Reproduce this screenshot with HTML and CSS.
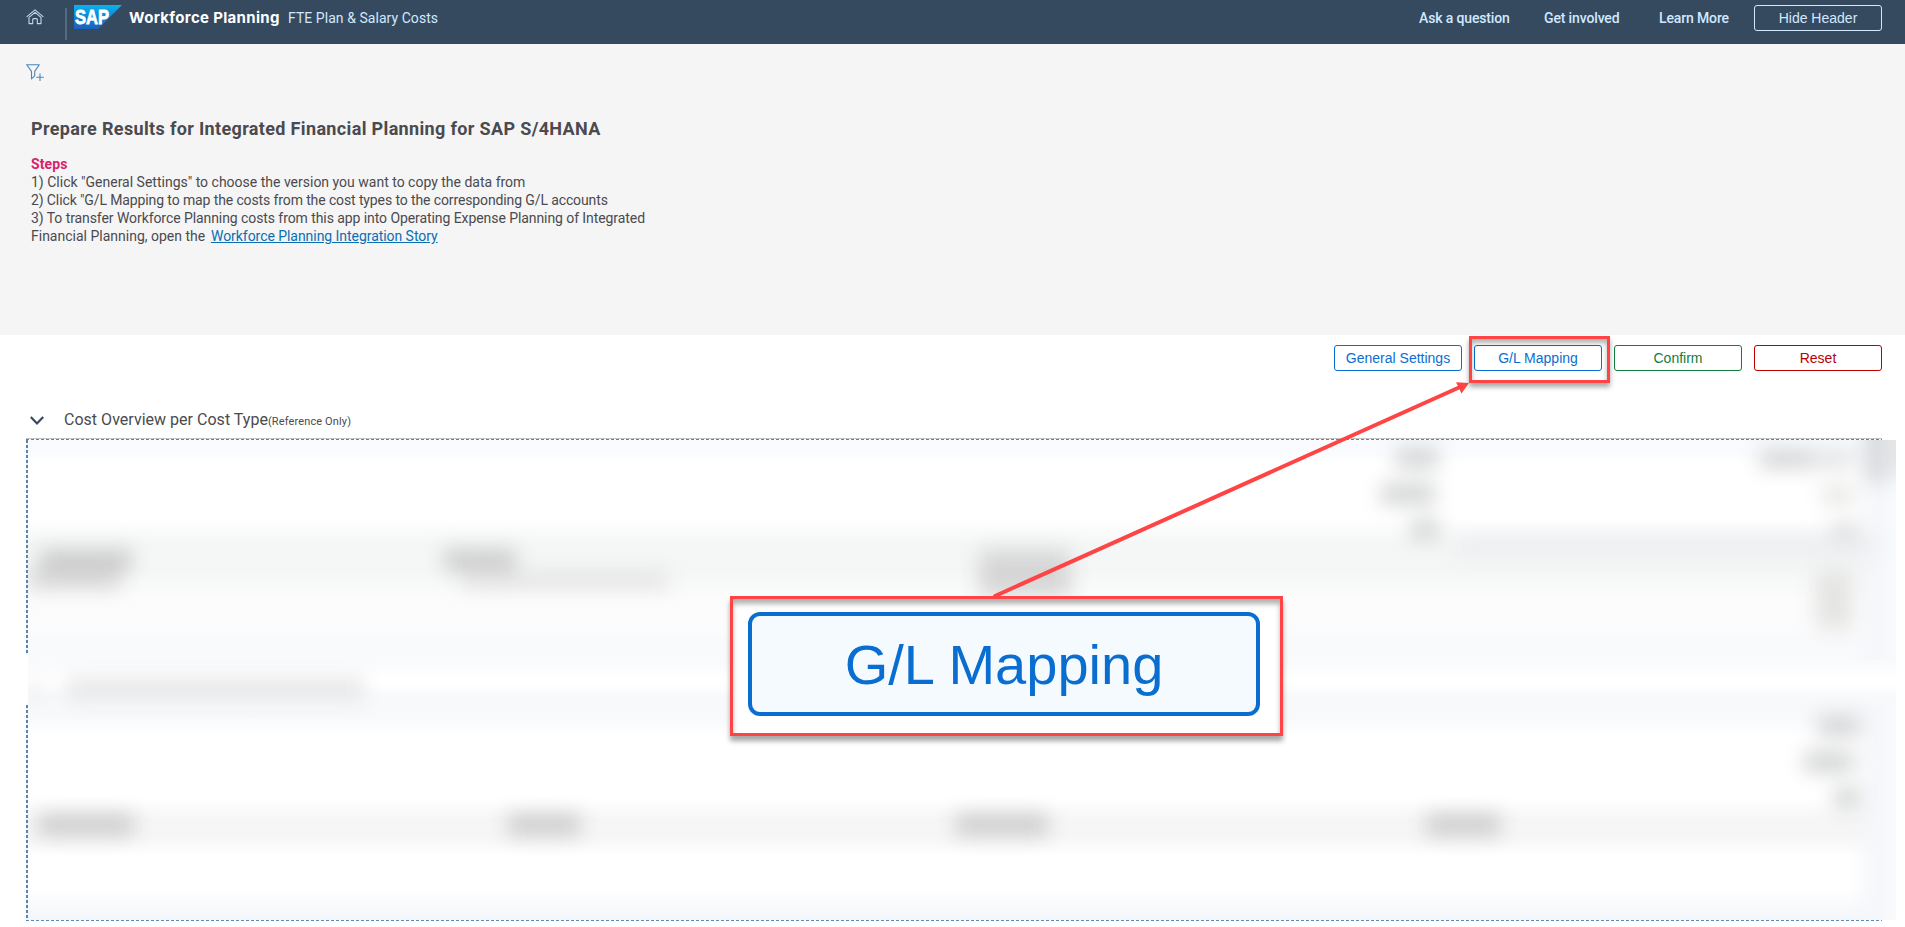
FILE: index.html
```html
<!DOCTYPE html>
<html lang="en">
<head>
<meta charset="utf-8">
<title>Workforce Planning</title>
<link rel="stylesheet" href="styles.css">
</head>
<body>
<div class="app">
  <header class="shell">
    <svg class="home" width="18" height="16" viewBox="0 0 18 16" fill="none" stroke="#c3d5ea" stroke-width="1.1" stroke-linejoin="round" stroke-linecap="round"><path d="M1 7.600 9 .9l8 6.700"/><path d="M3 8.400 9 3.400l6 5v6.200h-3.700V10.600a1 1 0 0 0-1-1H7.700a1 1 0 0 0-1 1V14.600H3z"/></svg>
    <span class="divider"></span>
    <svg class="logo" width="48" height="24" viewBox="0 0 48 24"><defs><linearGradient id="sap" x1="0" y1="0" x2="0" y2="1"><stop offset="0" stop-color="#07b4ef"/><stop offset=".5" stop-color="#1284d4"/><stop offset="1" stop-color="#1e5fbb"/></linearGradient></defs><path d="M0 0h48L24 24H0z" fill="url(#sap)"/><text x="1" y="19" class="logo-text" textLength="34" lengthAdjust="spacingAndGlyphs">SAP</text></svg>
    <h1 class="product">Workforce Planning</h1>
    <span class="subtitle">FTE Plan &amp; Salary Costs</span>
    <nav class="links">
      <a class="l-ask">Ask a question</a><a class="l-get">Get involved</a><a class="l-learn">Learn More</a>
    </nav>
    <button class="btn hide">Hide Header</button>
  </header>

  <section class="intro">
    <svg class="filter" width="18" height="18" viewBox="0 0 18 18" fill="none" stroke="#4c86b8" stroke-width="1.1"><path d="M.7.800h12.600L8.700 7.400v4.400l-3.200 3V7.400z" stroke-linejoin="round"/><path d="M14 9.500v7.500M10.300 13.300h7.500"/></svg>
    <h2 class="heading">Prepare Results for Integrated Financial Planning for SAP S/4HANA</h2>
    <div class="steps">
      <div class="steps-label">Steps</div>
      <div>1) Click "General Settings" to choose the version you want to copy the data from</div>
      <div class="s2">2) Click "G/L Mapping to map the costs from the cost types to the corresponding G/L accounts</div>
      <div class="s3">3) To transfer Workforce Planning costs from this app into Operating Expense Planning of Integrated</div>
      <div class="last"><span class="s4">Financial Planning, open the</span><a class="story">Workforce Planning Integration Story</a></div>
    </div>
  </section>

  <div class="actions">
    <button class="btn blue">General Settings</button>
    <button class="btn blue">G/L Mapping</button>
    <button class="btn green">Confirm</button>
    <button class="btn red">Reset</button>
  </div>

  <div class="section-title">
    <svg width="14" height="10" viewBox="0 0 14 10" fill="none" stroke="#354a5f" stroke-width="2.200"><path d="M.8 1 7 7.500 13.200 1"/></svg>
    <span class="section-name">Cost Overview per Cost Type</span><span class="section-note">(Reference Only)</span>
  </div>

  <main class="grid">
    <div class="rule-top"></div>
    <div class="grid-body">
      <div class="rule-left"><i></i><i></i></div>
      <svg class="masked" width="1868" height="480" viewBox="28 440 1868 480">
        <defs>
          <filter id="b" filterUnits="userSpaceOnUse" x="-20" y="390" width="1980" height="580" color-interpolation-filters="sRGB"><feGaussianBlur stdDeviation="10"/></filter>
          <linearGradient id="edge" x1="0" x2="1" y1="0" y2="0"><stop offset="0" stop-color="#f4f6fa" stop-opacity="0"/><stop offset=".6" stop-color="#f5f7fa"/><stop offset="1" stop-color="#f9fafc"/></linearGradient>
        </defs>
        <rect x="1850" y="440" width="46" height="220" fill="url(#edge)"/>
        <rect x="1850" y="705" width="46" height="215" fill="url(#edge)"/>
        <g filter="url(#b)">
          <rect x="1455" y="538" width="420" height="18" fill="#ebedf0"/>
          <g fill="#cacaca">
            <rect x="40" y="550" width="92" height="20"/>
            <rect x="28" y="570" width="92" height="18" fill="#d6d6d6"/>
            <rect x="444" y="550" width="72" height="20"/>
            <rect x="462" y="572" width="206" height="16" fill="#e2e2e2"/>
            <rect x="979" y="550" width="92" height="46" fill="#d6d6d6"/>
            <rect x="38" y="815" width="96" height="20"/>
            <rect x="508" y="815" width="72" height="20"/>
            <rect x="956" y="815" width="92" height="20"/>
            <rect x="1426" y="815" width="74" height="20"/>
          </g>
          <g fill="#d2d3d4">
            <rect x="1396" y="448" width="42" height="20"/>
            <rect x="1381" y="484" width="54" height="20"/>
            <rect x="1411" y="520" width="28" height="20"/>
            <rect x="1760" y="450" width="50" height="18"/>
            <rect x="1810" y="450" width="46" height="18" fill="#e2e3e3"/>
            <rect x="1822" y="486" width="32" height="18" fill="#e6e6e4"/>
            <rect x="1832" y="522" width="26" height="18" fill="#dfe0e0"/>
            <rect x="1816" y="570" width="36" height="60" fill="#e4e4e3"/>
            <rect x="1818" y="716" width="42" height="20"/>
            <rect x="1804" y="752" width="50" height="20"/>
            <rect x="1834" y="788" width="26" height="20" fill="#d0d3d1"/>
          </g>
          <rect x="1868" y="420" width="16" height="62" fill="#cccfd2"/>
          <rect x="1880" y="420" width="40" height="56" fill="#e6e7e9"/>
          <rect x="66" y="678" width="298" height="22" fill="#e6e6e8"/>
          <rect x="28" y="680" width="12" height="20" fill="#eaeaee"/>
        </g>
      </svg>
    </div>
    <div class="rule-bottom"></div>
  </main>

  <div class="mark mark-small"></div>
  <div class="mark mark-large"><div class="callout">G/L Mapping</div></div>
  <svg class="arrow" width="480" height="220" viewBox="992 380 480 220"><path d="M995 596 1459 387.500" stroke="#fe4444" stroke-width="4" stroke-linecap="round"/><path d="M1469 383 1456 382.200 1461.500 393.500z" fill="#fe4444"/></svg>
</div>
</body>
</html>
```
FILE: styles.css
```css
* { box-sizing: border-box; }
body { margin: 0; background: #fff; font-family: Roboto, "Liberation Sans", sans-serif; color: #4a4a4f; }
.app { position: relative; width: 1905px; height: 927px; overflow: hidden; display: flex; flex-direction: column; }
.shell { height: 44px; flex: none; background: #354a5f; display: flex; align-items: flex-start; padding: 5px 23px 0 26px; color: #d1e8ff; white-space: nowrap; }
.home { margin-top: 4px; }
.divider { width: 2px; height: 32px; margin: 3px 7px 0 21px; background: #556b81; }
.logo { flex: none; }
.logo-text { font: bold 20px "Liberation Sans", sans-serif; fill: #fff; stroke: #fff; stroke-width: .8px; }
.product { margin: 0 0 0 7px; width: 159px; font-family: Inter, sans-serif; font-size: 15px; line-height: 26px; font-weight: 700; letter-spacing: .32px; color: #fff; }
.subtitle { font-size: 14px; line-height: 27px; letter-spacing: .05px; }
.links { flex: 1; display: flex; justify-content: flex-end; font-size: 14px; line-height: 27px; margin-right: 25px; font-weight: 500; letter-spacing: -.14px; }
.l-ask { width: 125px; }
.l-get { width: 115px; }
.l-learn { width: 70px; }
.btn { width: 128px; height: 26px; padding: 0; background: #fff; border: 1px solid; border-radius: 3px; font: 14px/22px "Liberation Sans", Arial, sans-serif; }
.hide { background: transparent; color: #d1e8ff; }
.intro { height: 291px; flex: none; background: #f5f5f5; padding: 20px 26px; display: flex; flex-direction: column; align-items: flex-start; white-space: nowrap; }
.filter { display: block; }
.heading { margin: 35px 0 0 5px; font-size: 18px; line-height: 24px; font-weight: 700; letter-spacing: .35px; }
.steps { margin: 14px 0 0 5px; font-size: 14px; line-height: 18px; }
.steps-label { color: #d9226e; font-weight: 700; letter-spacing: .1px; }
.s2 { letter-spacing: -.115px; }
.s3 { letter-spacing: -.075px; }
.last { display: flex; }
.s4 { width: 180px; }
.story { color: #0a6eb4; text-decoration: underline; letter-spacing: -.05px; }
.actions { height: 36px; flex: none; padding: 10px 23px 0; display: flex; justify-content: flex-end; gap: 12px; }
.blue { color: #0a6ed1; }
.green { color: #107e3e; }
.red { color: #bb0000; }
.section-title { height: 67px; flex: none; padding: 37px 30px 0; display: flex; align-items: baseline; white-space: nowrap; }
.section-title svg { align-self: flex-start; margin: 8px 20px 0 0; }
.section-name { font-size: 16px; line-height: 24px; letter-spacing: .02px; }
.section-note { font-size: 11px; letter-spacing: .13px; }
.grid { margin-left: 26px; display: flex; flex-direction: column; }
.rule-top { width: 1856px; height: 2px; border-top: 1px solid #c4c4c4; background: repeating-linear-gradient(90deg, #5b84ab 0 3px, #fff 3px 5px); }
.grid-body { display: flex; height: 480px; }
.rule-left { width: 2px; display: flex; flex-direction: column; justify-content: space-between; }
.rule-left i { height: 215px; background: repeating-linear-gradient(180deg, #5b84ab 0 3px, #eef3f8 3px 5px); }
.masked { display: block; background: linear-gradient(180deg, #f8fafd 0, #f9fbfd 12px, #fff 24px, #fff 78px, #f5f6f6 104px, #f5f6f6 130px, #fcfcfc 160px, #fcfcfc 188px, #f8fafc 202px, #f8fafc 220px, #fff 238px, #fff 244px, #f7f9fb 258px, #f7f9fb 276px, #fff 296px, #fff 358px, #f6f6f6 380px, #f6f6f6 396px, #fff 416px, #fff 448px, #f3f6fa 480px); }
.rule-bottom { width: 1856px; height: 1px; background: repeating-linear-gradient(90deg, #5b8abb 0 3px, #fff 3px 5px); }
.mark { position: absolute; border: 3px solid #fe4444; box-shadow: 0 4px 5px rgba(0,0,0,.35), inset 0 4px 5px rgba(0,0,0,.3); }
.mark-small { left: 1469px; top: 336px; width: 141px; height: 47px; }
.mark-large { left: 730px; top: 596px; width: 553px; height: 140px; background: #fff; padding: 13px 20px 17px 15px; box-shadow: 0 5px 5px rgba(0,0,0,.35), inset 0 5px 5px rgba(0,0,0,.3); }
.callout { height: 104px; width: 512px; border: 4px solid #0a6ed1; border-radius: 12px; background: #f5faff; color: #0a6ed1; font: 56px/97px "Liberation Sans", Arial, sans-serif; text-align: center; }
.arrow { position: absolute; left: 992px; top: 380px; }
```
